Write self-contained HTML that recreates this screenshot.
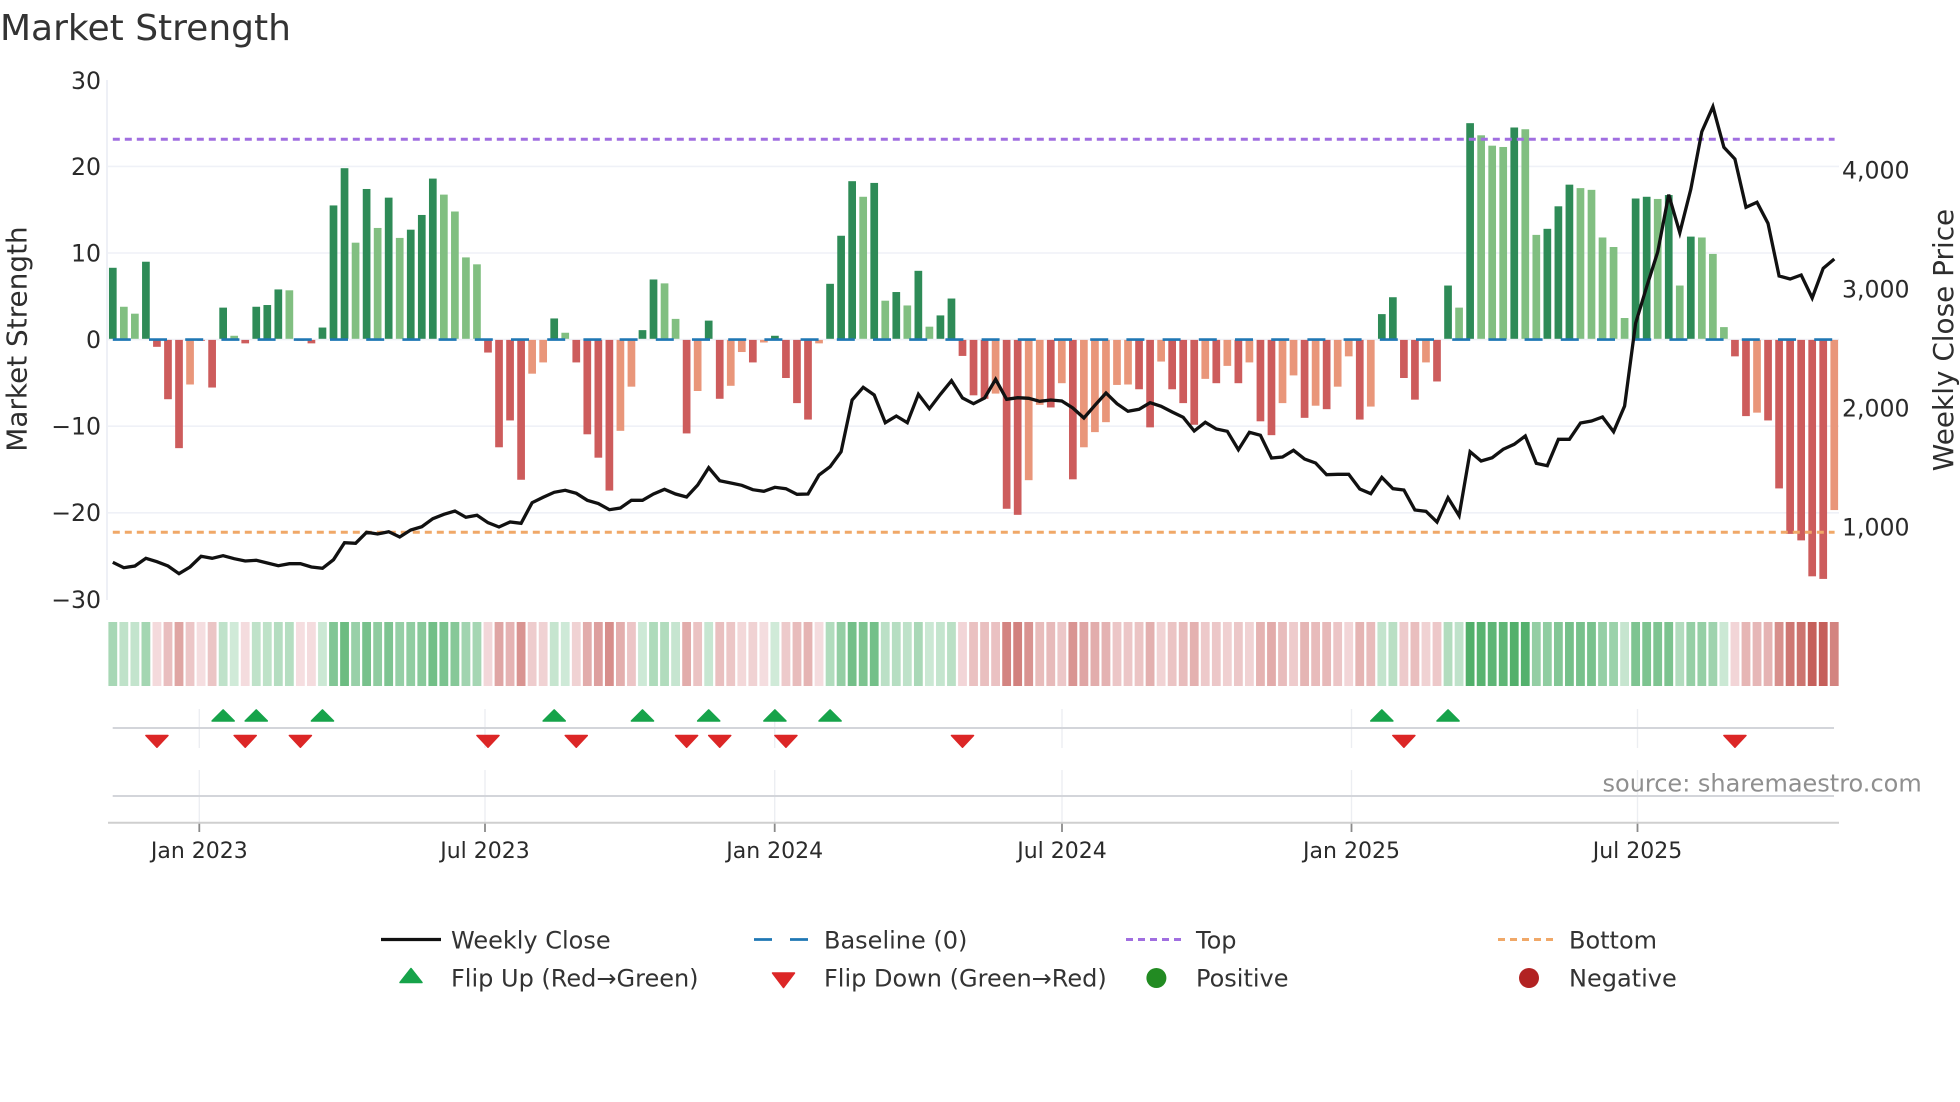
<!DOCTYPE html>
<html lang="en">
<head>
<meta charset="utf-8">
<title>Market Strength</title>
<style>
html,body{margin:0;padding:0;background:#fff;}
svg{display:block;font-family:"DejaVu Sans","Liberation Sans",sans-serif;}
.t{font-size:22px;fill:#2a2a2a;}
.y{font-size:23.6px;fill:#2a2a2a;}
.l{font-size:24px;fill:#333;}
.a{font-size:27.9px;fill:#2e2e2e;}
</style>
</head>
<body>
<svg id="c" xmlns="http://www.w3.org/2000/svg" width="1960" height="1102" viewBox="0 0 1960 1102">
<rect width="1960" height="1102" fill="#fff"/>
<g id="grid"></g>
<g id="bars"></g>
<g id="heat"></g>
<g id="overlay"></g>
<g id="marks"></g>

<text x="0" y="40" font-size="36" fill="#333">Market Strength</text>

<g text-anchor="end">
<text class="y" x="101" y="89">30</text>
<text class="y" x="101" y="175">20</text>
<text class="y" x="101" y="261.5">10</text>
<text class="y" x="101" y="348">0</text>
<text class="y" x="101" y="434.5">−10</text>
<text class="y" x="101" y="521">−20</text>
<text class="y" x="101" y="608">−30</text>
</g>

<text class="y" x="1842" y="178.5">4,000</text>
<text class="y" x="1842" y="297.5">3,000</text>
<text class="y" x="1842" y="416.5">2,000</text>
<text class="y" x="1842" y="535.5">1,000</text>

<text class="a" text-anchor="middle" transform="translate(26.5,339) rotate(-90)">Market Strength</text>
<text class="a" text-anchor="middle" transform="translate(1953,340) rotate(-90)">Weekly Close Price</text>

<g text-anchor="middle">
<text class="t" x="199.3" y="858">Jan 2023</text>
<text class="t" x="485" y="858">Jul 2023</text>
<text class="t" x="774.7" y="858">Jan 2024</text>
<text class="t" x="1062" y="858">Jul 2024</text>
<text class="t" x="1351.5" y="858">Jan 2025</text>
<text class="t" x="1637.5" y="858">Jul 2025</text>
</g>

<text x="1602.5" y="791.5" font-size="24" fill="#8f8f8f">source: sharemaestro.com</text>

<!-- legend -->
<line x1="381" y1="939.5" x2="441" y2="939.5" stroke="#111" stroke-width="3.2"/>
<polygon points="411,968.5 400,982.5 422,982.5" fill="#16a34a" stroke="#16a34a" stroke-width="1.5" stroke-linejoin="round"/>
<line x1="754" y1="939.5" x2="808" y2="939.5" stroke="#1f77b4" stroke-width="2.8" stroke-dasharray="18 18"/>
<polygon points="772.5,973 794.5,973 783.5,987.5" fill="#dc2626" stroke="#dc2626" stroke-width="1.5" stroke-linejoin="round"/>
<line x1="1126" y1="939.5" x2="1181" y2="939.5" stroke="#a06ee0" stroke-width="3" stroke-dasharray="7 5"/>
<line x1="1498" y1="939.5" x2="1554" y2="939.5" stroke="#f0a868" stroke-width="3" stroke-dasharray="7 5"/>
<circle cx="1156.4" cy="978" r="10" fill="#228b22"/>
<circle cx="1529" cy="978" r="10" fill="#b22222"/>

<text class="l" x="451" y="948.5">Weekly Close</text>
<text class="l" x="451" y="986.5">Flip Up (Red→Green)</text>
<text class="l" x="824" y="948.5">Baseline (0)</text>
<text class="l" x="824" y="986.5">Flip Down (Green→Red)</text>
<text class="l" x="1196" y="948.5">Top</text>
<text class="l" x="1196" y="986.5">Positive</text>
<text class="l" x="1569" y="948.5">Bottom</text>
<text class="l" x="1569" y="986.5">Negative</text>
</svg>

<script>
(function(){
var NS="http://www.w3.org/2000/svg";
function el(p,n,a){var e=document.createElementNS(NS,n);for(var k in a)e.setAttribute(k,a[k]);document.getElementById(p).appendChild(e);return e;}
var X0=112.8,DX=11.035,Y0=339.6,K=8.66;
function X(i){return X0+DX*i;}
var D="#2e8b57",L="#81bf81",R="#cd5c5c",O="#e9967a";
var v=[8.2,3.7,2.9,8.9,-0.8,-6.85,-12.5,-5.15,-0.1,-5.5,3.6,0.35,-0.4,3.7,3.9,5.7,5.6,-0.1,-0.4,1.3,15.4,19.7,11.1,17.3,12.8,16.3,11.65,12.6,14.3,18.5,16.65,14.7,9.4,8.6,
-1.46,-12.4,-9.3,-16.15,-3.9,-2.6,2.35,0.7,-2.6,-10.9,-13.6,-17.4,-10.5,-5.4,1.0,6.85,6.4,2.3,-10.8,-5.9,2.1,-6.8,-5.3,-1.4,-2.6,-0.3,0.35,-4.4,-7.3,-9.2,-0.4,
6.35,11.9,18.2,16.4,18,4.4,5.4,3.85,7.85,1.4,2.7,4.65,-1.85,-6.4,-6.8,-6.2,-19.5,-20.2,-16.2,-7.5,-7.8,-5,-16.1,-12.4,-10.65,-9.5,-5.2,-5.15,-5.7,-10.1,-2.5,-5.7,-7.3,-9.8,-4.5,-5,-3,-5,-2.6,-9.4,-11,-7.3,-4.1,-9,-7.6,-8,-5.4,-1.9,-9.2,-7.7,2.85,4.8,
-4.4,-6.9,-2.6,-4.8,6.15,3.6,24.9,23.5,22.3,22.15,24.4,24.2,12,12.7,15.3,17.8,17.4,17.2,11.7,10.6,2.4,16.2,16.4,16.15,16.6,6.15,11.8,11.7,9.8,1.35,-1.9,-8.8,-8.4,-9.3,-17.15,-22.4,-23.15,-27.3,-27.6,-19.65];
var cls={};
var lightG=[1,2,11,16,22,24,26,30,31,32,33,41,50,51,68,70,72,74,122,124,125,126,128,129,133,134,135,136,137,140,142,144,145,146];
var orange=[7,38,39,46,47,53,56,57,59,64,80,83,84,86,88,89,90,91,92,95,99,101,103,106,107,109,111,112,114,119,149,156];
lightG.forEach(function(i){cls[i]=L;});orange.forEach(function(i){cls[i]=O;});

// grid
[166.4,253,339.6,426.2,512.8].forEach(function(y){el("grid","line",{x1:107,x2:1839,y1:y,y2:y,stroke:"#eff1f7","stroke-width":1.6});});
el("grid","line",{x1:107,x2:107,y1:80,y2:600,stroke:"#eef0f6","stroke-width":2});

// bars
v.forEach(function(val,i){
  var h=Math.abs(val)*K,x=X(i)-3.85;
  var c=cls[i]||(val>=0?D:R);
  if(val>=0) el("bars","rect",{x:x,y:Y0-h-0.8,width:7.7,height:h,fill:c});
  else el("bars","rect",{x:x,y:Y0+0.3,width:7.7,height:h,fill:c});
});

// heat strip
v.forEach(function(val,i){
  var a=Math.abs(val),c;
  if(val>=0) c="rgb("+Math.round(210-5.2*a)+","+Math.round(235-2.4*a)+","+Math.round(218-4.5*a)+")";
  else c="rgb("+Math.round(245-1.75*a)+","+Math.round(222-4.6*a)+","+Math.round(224-4.87*a)+")";
  el("heat","rect",{x:X(i)-4.4,y:622,width:8.8,height:64,fill:c});
});

// reference lines
el("overlay","line",{x1:112.8,x2:1834.6,y1:339.6,y2:339.6,stroke:"#1f77b4","stroke-width":2.6,"stroke-dasharray":"18 18.2"});
el("overlay","line",{x1:112.8,x2:1834.6,y1:139.3,y2:139.3,stroke:"#a06ee0","stroke-width":3,"stroke-dasharray":"7 5"});
el("overlay","line",{x1:112.8,x2:1834.6,y1:532.3,y2:532.3,stroke:"#f0a868","stroke-width":3,"stroke-dasharray":"7 5"});

// weekly close
var y=[562.3,567.7,566,558.3,561.7,566,573.7,567,556.3,558.3,555.7,558.7,561,560.3,563,565.7,563.7,563.7,567,568.3,559.7,542.7,543.3,532.3,534,531.7,537,530,526.7,518.7,514.3,511,517.3,515.3,522.7,527,522,523.3,502.7,497.3,492.3,490.3,493.3,500.3,503.5,509.7,508,500.3,500.3,494,489.3,494,497,485,467.7,480.7,483,485.3,489.7,491.3,487.3,488.7,494.3,494,475,466.7,451.7,400,387.3,395,422.7,416,422.7,394.3,408.7,394.3,380.7,398,403.7,398,379.3,399.3,397.7,398.3,401.3,400,401,408,418,405.3,393,403.7,411.3,409.3,402.7,406.3,412,417.3,431,422.3,429,431.3,449.7,432.3,435.3,458,457,450.3,459,463,474.7,474.3,474.3,489,493.7,477.3,488.7,490,510,511.3,522,497.7,515.7,451.7,461,457.7,449.3,444.3,436,463.3,465.7,439.3,439.3,423,421,417,431.7,406,323.3,286.7,252,194.7,232.7,189.3,131.7,106.7,147.3,159,207.3,202.3,223.3,276,279,275,298,268.3,259];
el("overlay","polyline",{points:y.map(function(p,i){return X(i).toFixed(1)+","+p;}).join(" "),fill:"none",stroke:"#111","stroke-width":3.3,"stroke-linejoin":"miter","stroke-miterlimit":4});

// flip strip lines + date ticks
[199.3,485,774.7,1062,1351.5,1637.5].forEach(function(x){
  el("marks","line",{x1:x,x2:x,y1:709,y2:748,stroke:"#eceef2","stroke-width":1.4});
  el("marks","line",{x1:x,x2:x,y1:770,y2:822,stroke:"#eceef2","stroke-width":1.4});
  el("marks","line",{x1:x,x2:x,y1:822,y2:832,stroke:"#8a8a8a","stroke-width":1.8});
});
el("marks","line",{x1:112.7,x2:1834,y1:728,y2:728,stroke:"#d3d5da","stroke-width":2});
el("marks","line",{x1:112.7,x2:1834,y1:796,y2:796,stroke:"#d3d5da","stroke-width":2});
el("marks","line",{x1:108,x2:1839,y1:822.7,y2:822.7,stroke:"#cfcfcf","stroke-width":2});

[10,13,19,40,48,54,60,65,115,121].forEach(function(i){
  var c=X(i);
  el("marks","polygon",{points:c+",710 "+(c-11)+",721 "+(c+11)+",721",fill:"#16a34a",stroke:"#16a34a","stroke-width":1.6,"stroke-linejoin":"round"});
});
[4,12,17,34,42,52,55,61,77,117,147].forEach(function(i){
  var c=X(i);
  el("marks","polygon",{points:(c-11)+",735.5 "+(c+11)+",735.5 "+c+",747.2",fill:"#dc2626",stroke:"#dc2626","stroke-width":1.6,"stroke-linejoin":"round"});
});
})();
</script>
</body>
</html>
